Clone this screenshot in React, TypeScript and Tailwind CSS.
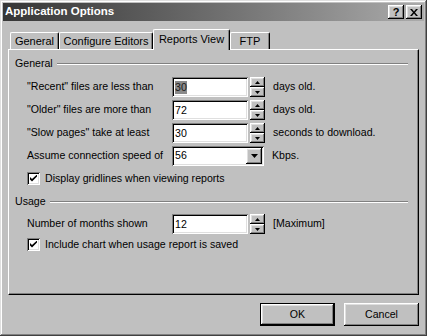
import {FC, ReactNode} from 'react';

const raised =
  'shadow-[inset_-1px_-1px_0_#000,inset_1px_1px_0_#fff,inset_-2px_-2px_0_#808080,inset_2px_2px_0_#dfdfdf]';
const sunken =
  'shadow-[inset_1px_1px_0_#808080,inset_-1px_-1px_0_#fff,inset_2px_2px_0_#000,inset_-2px_-2px_0_#dfdfdf]';

const Arrow: FC<{up?: boolean}> = ({up}) => (
  <svg width="5" height="3" viewBox="0 0 5 3">
    <polygon points={up ? '2.5,0 5,3 0,3' : '0,0 5,0 2.5,3'} fill="#000" />
  </svg>
);

const Spinner = () => (
  <div className="flex flex-col w-[15px] h-[20px] ml-[2px]">
    <div className={`h-[10px] flex items-center justify-center bg-[#c0c0c0] ${raised}`}>
      <Arrow up />
    </div>
    <div className={`h-[10px] flex items-center justify-center bg-[#c0c0c0] ${raised}`}>
      <Arrow />
    </div>
  </div>
);

const TextBox: FC<{value: string; selected?: boolean}> = ({value, selected}) => (
  <div className={`w-[76px] h-[20px] bg-white flex items-center pl-[3px] ${sunken}`}>
    <span className={selected ? 'bg-[#8a8a8a] text-[#1a1a1a] leading-[13px]' : 'leading-[13px]'}>
      {value}
    </span>
  </div>
);

const Row: FC<{label: string; children: ReactNode; after: string}> = ({label, children, after}) => (
  <div className="flex items-center h-[20px]">
    <span className="w-[145px]">{label}</span>
    {children}
    <span className="ml-[8px]">{after}</span>
  </div>
);

const Check: FC<{label: string}> = ({label}) => (
  <div className="flex items-center h-[13px]">
    <div className={`w-[13px] h-[13px] bg-white flex items-center justify-center ${sunken}`}>
      <svg width="7" height="7" viewBox="0 0 7 7">
        <path d="M0 2 L0 4.5 L2 6.5 L7 1.5 L7 -0.5 L2 4 Z" fill="#000" />
      </svg>
    </div>
    <span className="ml-[5px]">{label}</span>
  </div>
);

const GroupHeader: FC<{label: string}> = ({label}) => (
  <div className="flex items-center h-[13px] pl-[6px] pr-[10px]">
    <span>{label}</span>
    <div className="flex-1 ml-[4px] border-t border-t-[#808080] border-b border-b-white" />
  </div>
);

const Tab: FC<{label: string; width: string; active?: boolean}> = ({label, width, active}) => (
  <div
    className={`${width} flex items-center justify-center rounded-t-[2px] border-l border-t border-white border-r border-r-black bg-[#c0c0c0] shadow-[inset_-1px_0_0_#808080] ${
      active ? 'h-[21px] -mb-[1px] relative z-10 pb-[2px]' : 'h-[17px]'
    }`}>
    {label}
  </div>
);

export default function App() {
  return (
    <div
      className={`w-[427px] h-[336px] bg-[#c0c0c0] p-[3px] flex flex-col text-[10.6px] text-black shadow-[inset_-1px_-1px_0_#404040,inset_1px_1px_0_#dfdfdf,inset_-2px_-2px_0_#808080,inset_2px_2px_0_#fff]`}
      style={{fontFamily: '"Liberation Sans", Arial, sans-serif'}}>
      {/* title bar */}
      <div className="h-[18px] flex items-center bg-gradient-to-r from-[#363636] to-[#ababab] pl-[2px] pr-[2px]">
        <span className="text-white font-bold text-[11.5px] flex-1">Application Options</span>
        <div className={`w-[16px] h-[14px] bg-[#c0c0c0] flex items-center justify-center font-bold text-[11px] ${raised}`}>
          ?
        </div>
        <div className={`w-[16px] h-[14px] ml-[2px] bg-[#c0c0c0] flex items-center justify-center ${raised}`}>
          <svg width="8" height="7" viewBox="0 0 8 7">
            <path d="M0 0 L2 0 L4 2.5 L6 0 L8 0 L5 3.5 L8 7 L6 7 L4 4.5 L2 7 L0 7 L3 3.5 Z" fill="#000" />
          </svg>
        </div>
      </div>

      {/* tabs */}
      <div className="mt-[8px] pl-[7px] h-[20px] flex items-end text-[11px]">
        <Tab label="General" width="w-[49px]" />
        <Tab label="Configure Editors" width="w-[94px]" />
        <Tab label="Reports View" width="w-[77px]" active />
        <Tab label="FTP" width="w-[40px]" />
      </div>

      {/* panel */}
      <div className="ml-[5px] w-[411px] h-[246px] flex flex-col border-l border-t border-white border-r border-b border-r-black border-b-black shadow-[inset_-1px_-1px_0_#808080]">
        <div className="mt-[7px]">
          <GroupHeader label="General" />
        </div>
        <div className="pl-[18px] mt-[7px] flex flex-col gap-[3px]">
          <Row label={'"Recent" files are less than'} after="days old.">
            <TextBox value="30" selected />
            <Spinner />
          </Row>
          <Row label={'"Older" files are more than'} after="days old.">
            <TextBox value="72" />
            <Spinner />
          </Row>
          <Row label={'"Slow pages" take at least'} after="seconds to download.">
            <TextBox value="30" />
            <Spinner />
          </Row>
          <Row label="Assume connection speed of" after="Kbps.">
            <div className={`w-[92px] h-[20px] bg-white flex items-center pl-[3px] pr-[2px] ${sunken}`}>
              <span className="flex-1">56</span>
              <div className={`w-[16px] h-[16px] bg-[#c0c0c0] flex items-center justify-center ${raised}`}>
                <svg width="7" height="4" viewBox="0 0 7 4">
                  <polygon points="0,0 7,0 3.5,4" fill="#000" />
                </svg>
              </div>
            </div>
          </Row>
        </div>
        <div className="pl-[18px] mt-[6px]">
          <Check label="Display gridlines when viewing reports" />
        </div>
        <div className="mt-[10px]">
          <GroupHeader label="Usage" />
        </div>
        <div className="pl-[18px] mt-[6px]">
          <Row label="Number of months shown" after="[Maximum]">
            <TextBox value="12" />
            <Spinner />
          </Row>
        </div>
        <div className="pl-[18px] mt-[4px]">
          <Check label="Include chart when usage report is saved" />
        </div>
      </div>

      {/* buttons */}
      <div className="mt-[8px] flex justify-end gap-[9px] pr-[5px]">
        <div className="w-[75px] h-[23px] border border-black">
          <div className={`w-full h-full flex items-center justify-center bg-[#c0c0c0] ${raised}`}>OK</div>
        </div>
        <div className={`w-[75px] h-[23px] flex items-center justify-center bg-[#c0c0c0] ${raised}`}>Cancel</div>
      </div>
    </div>
  );
}
